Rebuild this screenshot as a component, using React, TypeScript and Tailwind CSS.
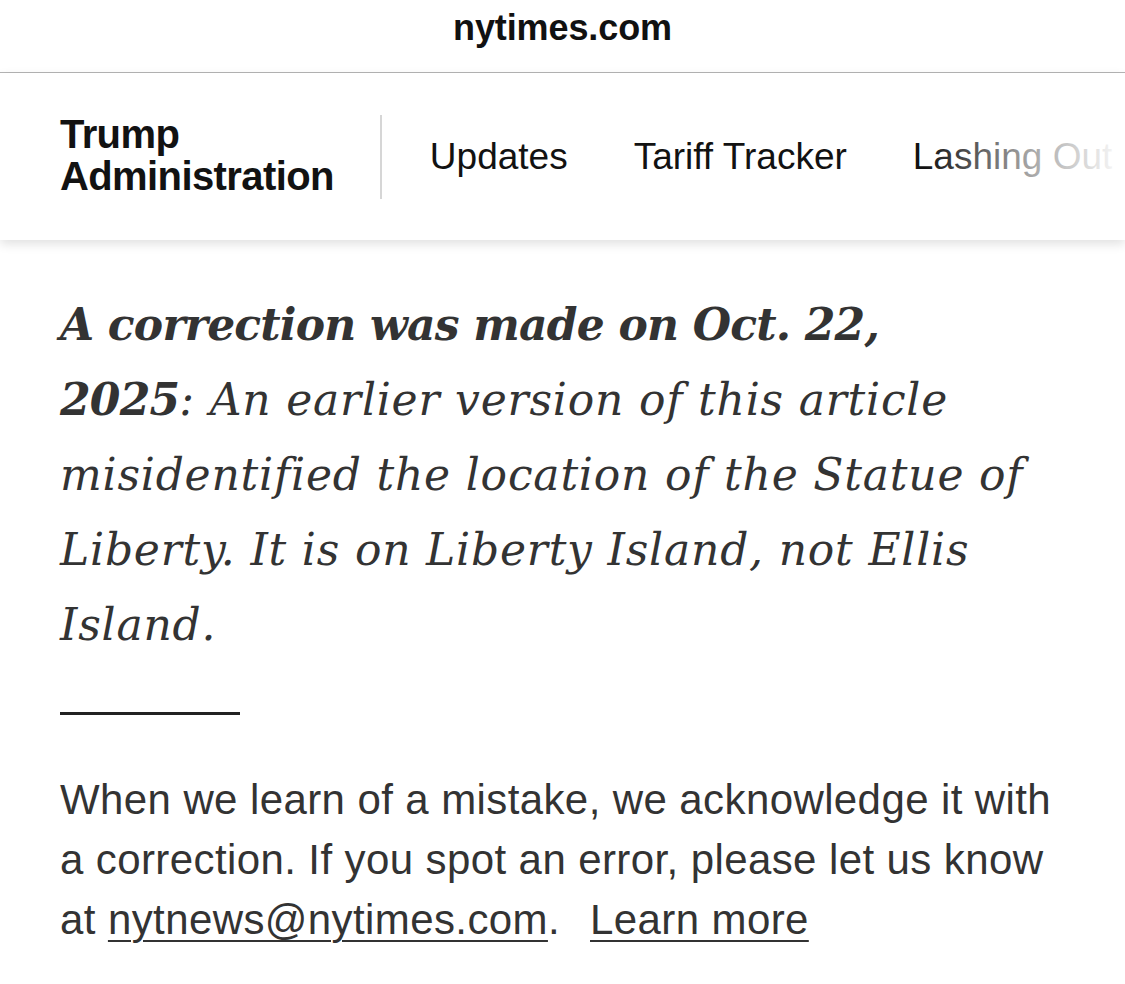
import React from "react";

export default function App() {
  return (
    <div className="min-h-[984px] w-[1125px] bg-white overflow-hidden">
      {/* top url bar */}
      <div className="h-[73px] border-b border-[#b5b5b5] flex justify-center items-start">
        <span className="mt-[7px] text-[36px] leading-[42px] font-bold text-[#111] font-['Liberation_Sans',Arial,sans-serif] tracking-[-0.1px]">
          nytimes.com
        </span>
      </div>

      {/* section nav */}
      <div className="relative h-[167px] bg-white shadow-[0_4px_10px_rgba(0,0,0,0.12)] flex items-center pl-[60px] font-['Liberation_Sans',Arial,sans-serif] overflow-hidden">
        <div className="shrink-0 text-[40px] leading-[42px] font-bold text-[#121212] tracking-[-0.6px] pr-[46px] mt-[-4px]">
          Trump
          <br />
          Administration
        </div>
        <div className="shrink-0 w-[2px] h-[84px] bg-[#d6d6d6]" />
        <div className="flex items-center gap-[66px] pl-[48px] text-[37px] leading-[42px] text-[#121212] whitespace-nowrap">
          <span>Updates</span>
          <span>Tariff Tracker</span>
          <span>Lashing Out</span>
        </div>
        <div className="absolute right-0 top-0 h-full w-[200px] bg-gradient-to-r from-white/0 via-white/60 to-white" />
        <div className="absolute right-0 top-0 h-full w-[12px] bg-white" />
      </div>

      {/* correction */}
      <div className="px-[60px] pt-[47px]">
        <p className="font-['DejaVu_Serif',Georgia,serif] italic text-[44px] leading-[75px] text-[#333] tracking-[0.8px]">
          <span className="font-bold tracking-[-0.8px]">A correction was made on Oct. 22,</span>
          <br />
          <span className="font-bold tracking-[-0.8px]">2025</span>: An earlier version of this article
          <br />
          misidentified the location of the Statue of
          <br />
          Liberty. It is on Liberty Island, not Ellis
          <br />
          Island.
        </p>

        <div className="mt-[50px] w-[180px] h-[3px] bg-[#222]" />

        <p className="mt-[55px] font-['Liberation_Sans',Arial,sans-serif] text-[42px] leading-[60px] text-[#333] tracking-[0.4px]">
          When we learn of a mistake, we acknowledge it with
          <br />
          a correction. If you spot an error, please let us know
          <br />
          at{" "}
          <span className="underline decoration-[2px] underline-offset-[6px]">nytnews@nytimes.com</span>.
          <span className="ml-[30px] underline decoration-[2px] underline-offset-[6px]">Learn more</span>
        </p>
      </div>
    </div>
  );
}
